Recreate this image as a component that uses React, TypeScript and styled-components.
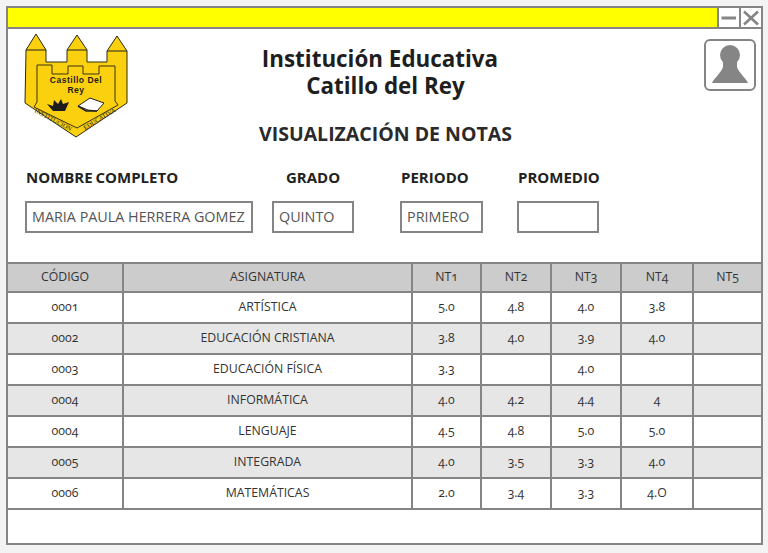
import React from "react";
import styled, { createGlobalStyle } from "styled-components";

const GlobalStyle = createGlobalStyle`
  html, body {
    margin: 0;
    padding: 0;
    background: #f3f3f3;
  }
  body {
    font-family: "Open Sans", "Liberation Sans", sans-serif;
    color: #333;
  }
`;

const grades = [
  ["0001", "ARTÍSTICA", "5.0", "4.8", "4.0", "3.8", ""],
  ["0002", "EDUCACIÓN CRISTIANA", "3.8", "4.0", "3.9", "4.0", ""],
  ["0003", "EDUCACIÓN FÍSICA", "3.3", "", "4.0", "", ""],
  ["0004", "INFORMÁTICA", "4.0", "4.2", "4.4", "4", ""],
  ["0004", "LENGUAJE", "4.5", "4.8", "5.0", "5.0", ""],
  ["0005", "INTEGRADA", "4.0", "3.5", "3.3", "4.0", ""],
  ["0006", "MATEMÁTICAS", "2.0", "3.4", "3.3", "4.O", ""],
];

const headers = ["CÓDIGO", "ASIGNATURA", "NT1", "NT2", "NT3", "NT4", "NT5"];

const Logo = () => (
  <svg width="106" height="106" viewBox="24 33 106 106">
    <path
      d="M26 50 L36 34 L46 50 L46 62 L67 62 L67 50 L77 35 L87 50 L87 62 L107 62 L107 51 L117 36 L127 51 L127 103 L76 137 L25 103 Z"
      fill="#fbd00f"
      stroke="#2a2a10"
      strokeWidth="1"
    />
    <path d="M26 50 H46 M67 50 H87 M107 51 H127" stroke="#222" strokeWidth="1" />
    <path
      d="M37 65 H52 V74 H68 V66 H83 V74 H99 V66 H115 V101 L118 105 L77 128 L34 107 L37 102 Z"
      fill="none"
      stroke="#3a3212"
      strokeWidth="1"
    />
    <text x="76" y="83" textAnchor="middle" fontFamily="Liberation Sans" fontWeight="700" fontSize="8.5" letterSpacing="0.5" fill="#1c1c1c">
      Castillo Del
    </text>
    <text x="76" y="93" textAnchor="middle" fontFamily="Liberation Sans" fontWeight="700" fontSize="8.5" letterSpacing="0.5" fill="#1c1c1c">
      Rey
    </text>
    <path d="M47 104 L53 106 L54 100 L58 104 L61 99 L63 104 L69 102 L65 111 L53 111 Z" fill="#1c1c1c" />
    <path d="M78 106 L90 98 L104 103 L97 111 L88 110 L83 108 Z" fill="#fff" stroke="#222" strokeWidth="1" />
    <path d="M78 106 L86 111 L97 111" fill="none" stroke="#222" strokeWidth="1.5" />
    <path id="logo-left" d="M34 112 L70 131" fill="none" />
    <path id="logo-right" d="M85 130 L120 109" fill="none" />
    <text fontFamily="Liberation Serif" fontSize="6.5" fill="#222">
      <textPath href="#logo-left">INSTITUCION</textPath>
    </text>
    <text fontFamily="Liberation Serif" fontSize="6.5" fill="#222">
      <textPath href="#logo-right">EDUCATIVA</textPath>
    </text>
  </svg>
);

const App = () => {
  return (
    <Page>
      <GlobalStyle />
      <Frame>
        <TitleBar>
          <WindowButton aria-label="minimizar">
            <svg width="18" height="16" viewBox="0 0 18 16">
              <path d="M1.5 8 H16" stroke="#858585" strokeWidth="3" />
            </svg>
          </WindowButton>
          <WindowButton aria-label="cerrar">
            <svg width="18" height="16" viewBox="0 0 18 16">
              <path d="M2 1.5 L16 14.5 M16 1.5 L2 14.5" stroke="#858585" strokeWidth="2.6" />
            </svg>
          </WindowButton>
        </TitleBar>
        <Header>
          <LogoBox>
            <Logo />
          </LogoBox>
          <Titles>
            <SchoolName>Institución Educativa</SchoolName>
            <SchoolTown>Catillo del Rey</SchoolTown>
            <PageTitle>VISUALIZACIÓN DE NOTAS</PageTitle>
          </Titles>
          <Avatar>
            <svg width="48" height="48" viewBox="0 0 48 48">
              <circle cx="24" cy="14" r="10" fill="#858585" />
              <path d="M17 20 H31 V26 C33 32 39 36 42 42 H6 C9 36 15 32 17 26 Z" fill="#858585" />
            </svg>
          </Avatar>
        </Header>
        <Fields>
          <Field $width={228} $gap={19}>
            <FieldLabel>NOMBRE COMPLETO</FieldLabel>
            <FieldValue>MARIA PAULA HERRERA GOMEZ</FieldValue>
          </Field>
          <Field $width={82} $gap={46}>
            <FieldLabel $center>GRADO</FieldLabel>
            <FieldValue>QUINTO</FieldValue>
          </Field>
          <Field $width={83} $gap={34}>
            <FieldLabel>PERIODO</FieldLabel>
            <FieldValue>PRIMERO</FieldValue>
          </Field>
          <Field $width={82} $gap={0}>
            <FieldLabel>PROMEDIO</FieldLabel>
            <FieldValue />
          </Field>
        </Fields>
        <Table>
          <HeadRow>
            {headers.map((h) => (
              <Cell key={h}>{h}</Cell>
            ))}
          </HeadRow>
          {grades.map((row, i) => (
            <Row key={i} $shaded={i % 2 === 1}>
              {row.map((value, j) => (
                <Cell key={j}>{value}</Cell>
              ))}
            </Row>
          ))}
        </Table>
      </Frame>
    </Page>
  );
};

const Page = styled.div`
  width: 768px;
  height: 553px;
  padding: 6px 5px 8px 6px;
  box-sizing: border-box;
  overflow: hidden;
`;
const Frame = styled.div`
  box-sizing: border-box;
  height: 539px;
  border: 2px solid #858585;
  background: #fff;
`;
const TitleBar = styled.div`
  display: flex;
  justify-content: flex-end;
  height: 19px;
  background: #ffff00;
  border-bottom: 2px solid #858585;
`;
const WindowButton = styled.div`
  display: flex;
  align-items: center;
  justify-content: center;
  width: 20px;
  background: #fff;
  border-left: 2px solid #858585;
`;
const Header = styled.div`
  display: flex;
  height: 125px;
  padding: 4px 0 0 16px;
  box-sizing: border-box;
`;
const LogoBox = styled.div`
  width: 106px;
  flex: none;
  svg {
    display: block;
  }
`;
const Titles = styled.div`
  width: 500px;
  flex: none;
  text-align: center;
`;
const SchoolName = styled.h1`
  margin: 12px 0 0;
  font-size: 22.4px;
  line-height: 27px;
  font-weight: 700;
  color: #1e1e1e;
`;
const SchoolTown = styled(SchoolName)`
  margin: 0;
  padding-left: 11px;
`;
const PageTitle = styled.h2`
  margin: 21px 0 0;
  padding-left: 11px;
  font-size: 19.5px;
  line-height: 27px;
  font-weight: 700;
  color: #2a2a2a;
`;
const Avatar = styled.div`
  display: flex;
  align-items: center;
  justify-content: center;
  flex: none;
  width: 48px;
  height: 48px;
  margin: 6px 5px 0 auto;
  border: 2px solid #858585;
  border-radius: 6px;
  background: #fff;
`;
const Fields = styled.div`
  display: flex;
  height: 108px;
  padding: 12px 0 0 17px;
  box-sizing: border-box;
`;
const Field = styled.div<{ $width: number; $gap: number }>`
  width: ${(p) => p.$width}px;
  margin-right: ${(p) => p.$gap}px;
`;
const FieldLabel = styled.div<{ $center?: boolean }>`
  height: 23px;
  margin-bottom: 12px;
  padding-left: ${(p) => (p.$center ? 0 : 1)}px;
  font-size: 15px;
  line-height: 23px;
  font-weight: 700;
  word-spacing: -1px;
  white-space: nowrap;
  color: #222;
  text-align: ${(p) => (p.$center ? "center" : "left")};
`;
const FieldValue = styled.div`
  box-sizing: border-box;
  height: 32px;
  padding: 0 5px;
  border: 2px solid #858585;
  font-size: 14.35px;
  line-height: 28px;
  white-space: nowrap;
  color: #555;
`;
const Table = styled.div`
  border-top: 2px solid #858585;
`;
const Row = styled.div<{ $shaded?: boolean }>`
  display: grid;
  grid-template-columns: 116px 289px 69px 70px 70px 72px 1fr;
  height: 31px;
  box-sizing: border-box;
  border-bottom: 2px solid #858585;
  background: ${(p) => (p.$shaded ? "#e6e6e6" : "#fff")};
`;
const HeadRow = styled(Row)`
  height: 29px;
  background: #cccccc;
`;
const Cell = styled.div`
  display: flex;
  align-items: center;
  justify-content: center;
  padding-bottom: 2px;
  border-right: 2px solid #858585;
  font-size: 12.3px;
  font-variant-numeric: oldstyle-nums;
  color: #333;
  &:last-child {
    border-right: none;
  }
`;

export default App;
